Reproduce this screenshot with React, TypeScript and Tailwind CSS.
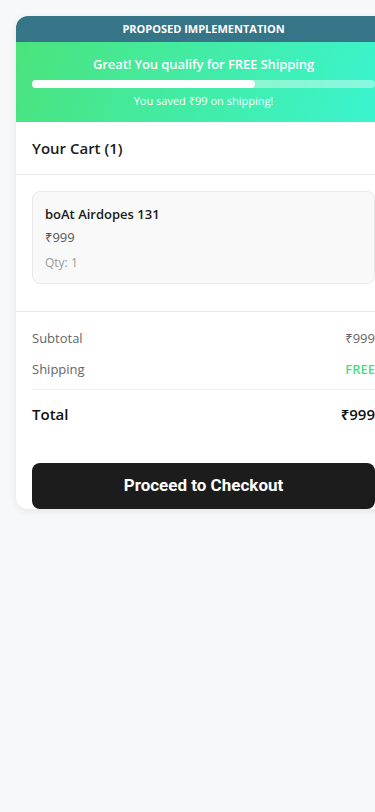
import React from 'react';

const body = { fontFamily: '"Open Sans", "Noto Sans", sans-serif' };

export default function App() {
  return (
    <div className="min-h-screen w-full overflow-hidden bg-[#f7f8fa] pl-4 pt-4" style={body}>
      <div className="w-[375px] overflow-hidden rounded-xl bg-white shadow-[0_2px_8px_rgba(0,0,0,0.08)]">
        <div className="flex h-[26px] items-center justify-center bg-[#367587] text-[11px] font-bold text-white">
          PROPOSED IMPLEMENTATION
        </div>

        <div className="bg-[linear-gradient(110deg,#4ae37c_0%,#3af5d2_100%)] px-4 pb-[13px] pt-[13px] text-center text-white">
          <p className="text-[13px] font-semibold leading-[18px] tracking-[-0.1px]">Great! You qualify for FREE Shipping</p>
          <div className="mt-[7px] h-2 w-full rounded-full bg-white/40">
            <div className="h-2 w-[65%] rounded-full bg-white" />
          </div>
          <p className="mt-[5px] text-[11px] leading-4">You saved ₹99 on shipping!</p>
        </div>

        <div className="border-b border-[#ebebeb] px-4 py-4">
          <h2 className="text-[15px] font-semibold leading-5 text-[#1a1a1a]">Your Cart (1)</h2>
        </div>

        <div className="border-b border-[#ebebeb] px-4 pb-[27px] pt-4">
          <div className="rounded-lg border border-[#e8e8e8] bg-[#f9f9f9] p-3">
            <p className="text-[13px] font-semibold leading-5 text-[#1a1a1a]">boAt Airdopes 131</p>
            <p className="mt-[3px] text-[13px] leading-5 text-[#555]">₹999</p>
            <p className="mt-2 text-[12px] leading-4 text-[#999]">Qty: 1</p>
          </div>
        </div>

        <div className="px-4 pt-4">
          <div className="flex justify-between text-[13px] leading-5 text-[#666]">
            <span>Subtotal</span>
            <span>₹999</span>
          </div>
          <div className="mt-[11px] flex justify-between text-[13px] leading-5 text-[#666]">
            <span>Shipping</span>
            <span className="font-semibold text-[#4ade80]">FREE</span>
          </div>
          <div className="mt-[10px] border-t border-[#eeeeee] pt-[13px]">
            <div className="flex justify-between text-[15px] font-semibold leading-[22px] text-[#111]">
              <span>Total</span>
              <span>₹999</span>
            </div>
          </div>
          <button
            className="mt-[38px] h-[46px] w-full rounded-lg bg-[#1c1c1c] text-[17px] font-bold text-white"
            style={{ fontFamily: 'Roboto, "Liberation Sans", sans-serif' }}
          >
            Proceed to Checkout
          </button>
        </div>
      </div>
    </div>
  );
}
